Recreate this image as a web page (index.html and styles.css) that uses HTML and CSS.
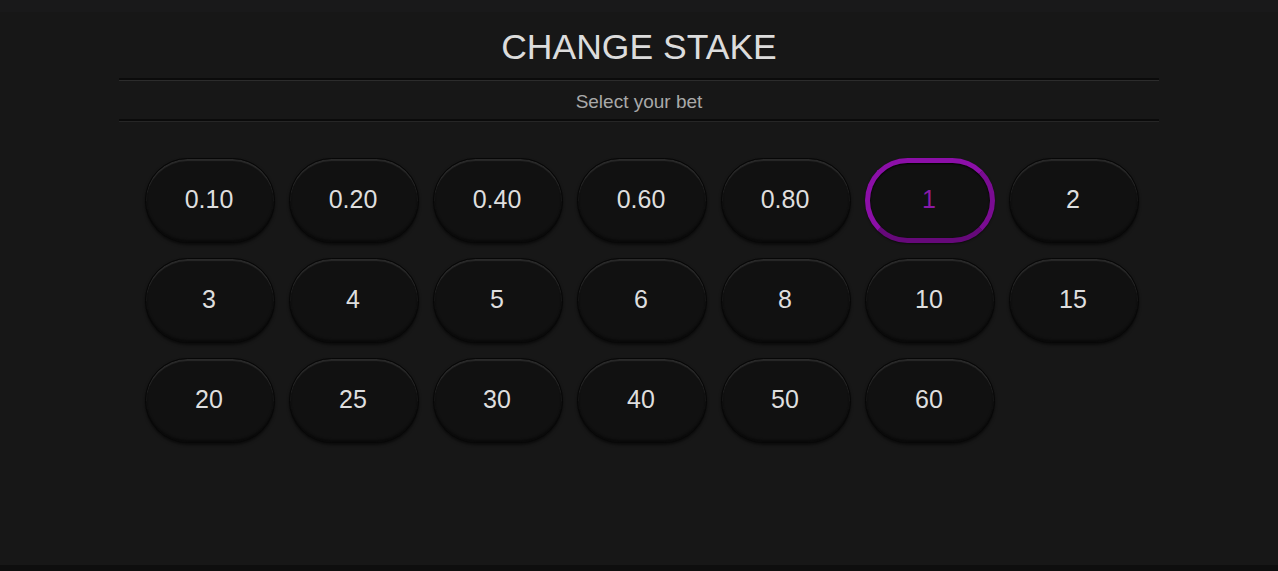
FILE: index.html
```html
<!DOCTYPE html>
<html lang="en">
<head>
<meta charset="utf-8">
<title>Change Stake</title>
<link rel="stylesheet" href="styles.css">
</head>
<body>
<div class="page">
  <div class="panel">
    <h1 class="title">CHANGE STAKE</h1>
    <div class="divider"></div>
    <div class="subtitle">Select your bet</div>
    <div class="divider divider-low"></div>
    <div class="grid">
      <button class="chip">0.10</button>
      <button class="chip">0.20</button>
      <button class="chip">0.40</button>
      <button class="chip">0.60</button>
      <button class="chip">0.80</button>
      <button class="chip chip-active">1</button>
      <button class="chip">2</button>
      <button class="chip">3</button>
      <button class="chip">4</button>
      <button class="chip">5</button>
      <button class="chip">6</button>
      <button class="chip">8</button>
      <button class="chip">10</button>
      <button class="chip">15</button>
      <button class="chip">20</button>
      <button class="chip">25</button>
      <button class="chip">30</button>
      <button class="chip">40</button>
      <button class="chip">50</button>
      <button class="chip">60</button>
    </div>
  </div>
  <div class="footer-band"></div>
</div>
</body>
</html>
```

FILE: styles.css
```css
* { box-sizing: border-box; }
html, body {
  margin: 0;
  padding: 0;
  background: #171717;
  font-family: "Liberation Sans", Arial, sans-serif;
}
.page {
  width: 1278px;
  height: 571px;
  display: flex;
  flex-direction: column;
  background: linear-gradient(#19191a 0, #19191a 12px, #171717 12px);
}
.panel {
  width: 1040px;
  margin: 0 auto;
  flex: 1;
}
.title {
  margin: 0;
  height: 78px;
  padding-top: 27px;
  font-size: 35.5px;
  font-weight: normal;
  line-height: 40px;
  color: #dcdcdc;
  text-align: center;
}
.divider {
  height: 3px;
  background: linear-gradient(#0b0b0b 0, #0b0b0b 2px, #2c2c2c 2px);
}
.divider-low {
  background: linear-gradient(#0b0b0b 0, #0b0b0b 2px, #262626 2px);
}
.subtitle {
  height: 38px;
  padding-top: 2px;
  line-height: 38px;
  font-size: 19px;
  color: #a9a9a9;
  text-align: center;
}
.grid {
  display: grid;
  grid-template-columns: repeat(7, 130px);
  grid-auto-rows: 85px;
  column-gap: 14px;
  row-gap: 15px;
  padding: 36px 0 0 26px;
}
.chip {
  border-radius: 44px;
  border: 1px solid #070707;
  background: #111111;
  color: #dedede;
  font-family: "Liberation Sans", Arial, sans-serif;
  font-size: 25px;
  padding: 0 2px 2px 0;
  box-shadow: inset 0 2px 1px #2a2a2a, inset 0 -2px 2px #0a0a0a, 0 2px 3px rgba(0, 0, 0, 0.55);
}
.chip-active {
  border: 5px solid #8c0fa8;
  border-bottom-color: #66097a;
  border-right-color: #7a0c92;
  color: #8a1aa8;
  box-shadow: inset 0 1px 2px #000, 0 1px 2px rgba(0, 0, 0, 0.5);
}
.footer-band {
  height: 6px;
  background: #0e0e0e;
}
```
